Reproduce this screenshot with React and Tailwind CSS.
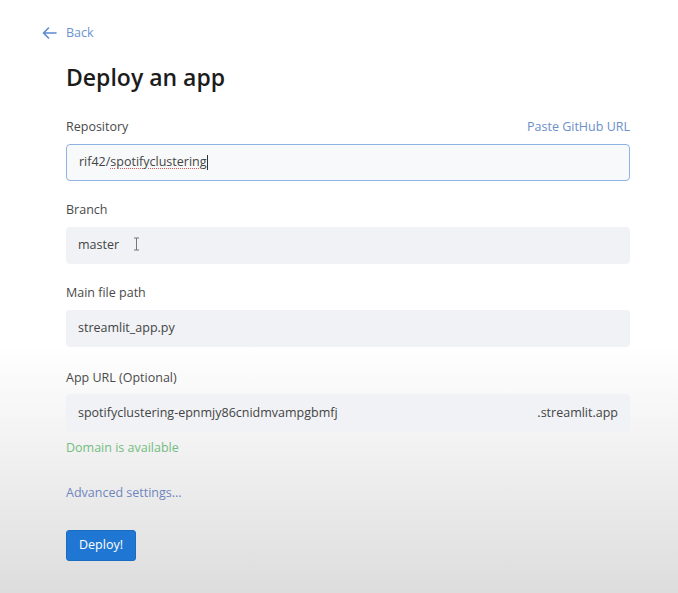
import React from 'react';

const fontStack = { fontFamily: '"Open Sans", "Noto Sans", Arial, sans-serif' };

function Field({ label, right, children, className = '' }) {
  return (
    <div className={`flex flex-col ${className}`}>
      <div className="flex items-center justify-between h-4 text-[12.5px] leading-4">
        <span className="text-[#4a4a4a]">{label}</span>
        {right}
      </div>
      {children}
    </div>
  );
}

export default function App() {
  return (
    <div
      className="w-[678px] h-[593px] overflow-hidden bg-[linear-gradient(to_bottom,#ffffff_0%,#ffffff_58%,#f2f2f2_75%,#dddddd_100%)]"
      style={fontStack}
    >
      <div className="pt-[23px] pl-[42px] flex items-center h-[43px] gap-[9px] text-[12.5px] text-[#6b93cf]">
        <svg width="15" height="12" viewBox="0 0 15 12" fill="none" stroke="#5b8ad0" strokeWidth="1.6" strokeLinecap="round" strokeLinejoin="round">
          <path d="M14 6H1.5M6.5 1L1.5 6l5 5" />
        </svg>
        <span>Back</span>
      </div>

      <div className="ml-[66px] w-[564px]">
        <h1 className="mt-[20px] text-[23px] leading-7 font-semibold text-[#1c1c1c]">Deploy an app</h1>

        <div className="mt-[28px] flex flex-col gap-[21px]">
          <Field label="Repository" right={<span className="text-[#6b8fc9]">Paste GitHub URL</span>}>
            <div className="mt-[9px] h-[37px] rounded-[4px] border border-[#8db2e4] bg-[#f8f9fb] flex items-center px-3 text-[12.5px] text-[#444]">
              <span>rif42/</span>
              <span className="underline decoration-dotted decoration-[#e05a5a] decoration-1 underline-offset-2">spotifyclustering</span>
              <span className="w-px h-[15px] bg-[#333]"></span>
            </div>
          </Field>

          <Field label="Branch">
            <div className="mt-[9px] h-[37px] rounded-[4px] bg-[#f0f2f6] flex items-center px-3 text-[12.5px] text-[#444]">
              <span>master</span>
              <svg className="ml-[14px] -mt-[4px]" width="7" height="14" viewBox="0 0 7 14" fill="none" stroke="#777" strokeWidth="1">
                <path d="M1 1h5M3.5 1v12M1 13h5" />
              </svg>
            </div>
          </Field>

          <Field label="Main file path">
            <div className="mt-[9px] h-[37px] rounded-[4px] bg-[#f0f2f6] flex items-center px-3 text-[12.5px] text-[#444]">
              streamlit_app.py
            </div>
          </Field>

          <Field label="App URL (Optional)" className="mt-[2px]">
            <div className="mt-[8px] h-[38px] rounded-[4px] bg-[#f0f2f6] flex items-center justify-between px-3 text-[12.5px] text-[#444]">
              <span>spotifyclustering-epnmjy86cnidmvampgbmfj</span>
              <span>.streamlit.app</span>
            </div>
          </Field>
        </div>

        <div className="mt-[8px] h-4 text-[12.5px] leading-4 text-[#72bd82]">Domain is available</div>

        <div className="mt-[29px] h-4 text-[12.5px] leading-4 text-[#6f86bf]">Advanced settings...</div>

        <button className="mt-[29px] h-[31px] px-[12px] rounded-[3px] bg-[#1f77d3] text-white text-[12.5px] border border-[#1a6cc2]">
          Deploy!
        </button>
      </div>
    </div>
  );
}
